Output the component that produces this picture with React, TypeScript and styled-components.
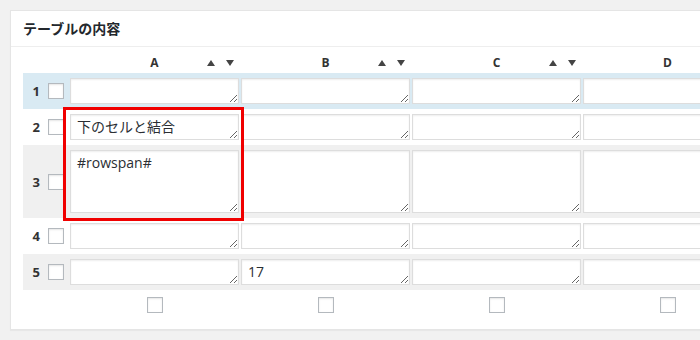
import React from "react";
import styled, {createGlobalStyle} from "styled-components";

const GlobalStyle = createGlobalStyle`
    html, body {
        margin: 0;
        padding: 0;
        background: #f1f1f1;
    }
    body {
        font-family: "Open Sans", "Noto Sans CJK JP", sans-serif;
        color: #32373c;
    }
`;

const Page = styled.div`
    width: 700px;
    height: 340px;
    overflow: hidden;
    padding: 10px 0 0 10px;
    box-sizing: border-box;
`;

const Postbox = styled.div`
    width: 780px;
    background: #fff;
    border: 1px solid #e5e5e5;
    box-shadow: 0 1px 1px rgba(0, 0, 0, .04);
`;

const Heading = styled.h2`
    margin: 0;
    padding: 8px 12px;
    font-family: "Noto Sans CJK JP", sans-serif;
    font-size: 14px;
    line-height: 19px;
    font-weight: 700;
    color: #23282d;
    border-bottom: 1px solid #eee;
`;

const Inside = styled.div`
    position: relative;
    padding: 0 12px 16px;
`;

const Row = styled.div<{$tone?: "blue" | "grey"}>`
    display: grid;
    grid-template-columns: 25px 22px repeat(4, 171px);
    align-items: center;
    padding: 5px 0;
    background: ${p => p.$tone === "blue" ? "#d9eaf3" : p.$tone === "grey" ? "#f0f0f0" : "transparent"};
`;

const HeadRow = styled(Row)`
    padding: 10px 0 4px;
`;

const FootRow = styled(Row)`
    padding: 7px 0 0;
`;

const ColHead = styled.div`
    width: 169px;
    display: grid;
    grid-template-columns: 1fr auto 1fr;
    align-items: center;
    font-size: 12px;
    line-height: 12px;
    font-weight: 700;
    color: #333;
`;

const Letter = styled.span`
    grid-column: 2;
`;

const Arrows = styled.span`
    grid-column: 3;
    justify-self: end;
    display: flex;
    gap: 11px;
    padding-right: 5px;
`;

const RowNum = styled.div`
    padding-right: 8px;
    text-align: right;
    font-size: 13px;
    font-weight: 700;
    color: #333;
`;

const Check = styled.input.attrs({type: "checkbox"})`
    appearance: none;
    display: block;
    width: 16px;
    height: 16px;
    margin: 0;
    background: #fff;
    border: 1px solid #b4b9be;
    box-shadow: inset 0 1px 2px rgba(0, 0, 0, .1);
    box-sizing: border-box;
`;

const Cell = styled.textarea<{$tall?: boolean}>`
    display: block;
    width: 169px;
    height: ${p => p.$tall ? 63 : 26}px;
    box-sizing: border-box;
    margin: 0;
    padding: 2px 6px;
    border: 1px solid #ddd;
    box-shadow: inset 0 1px 2px rgba(0, 0, 0, .07);
    background: #fff;
    font: 14px/20px "Open Sans", "Noto Sans CJK JP", sans-serif;
    color: #2a2e33;
    resize: both;
    outline: none;
    overflow: hidden;
`;

const FootCell = styled.div`
    width: 169px;
    display: flex;
    justify-content: center;
`;

const Highlight = styled.div`
    position: absolute;
    left: 52px;
    top: 60px;
    width: 181px;
    height: 114px;
    box-sizing: border-box;
    border: 3px solid #f00000;
    pointer-events: none;
`;

const Tri = ({down}: {down?: boolean}) => (
    <svg width={8} height={6} viewBox="0 0 8 6">
        <polygon points={down ? "0,0 8,0 4,6" : "4,0 8,6 0,6"} fill="#444"/>
    </svg>
);

const columns = ["A", "B", "C", "D"];

const rows: {n: number; tone?: "blue" | "grey"; tall?: boolean; cells: string[]}[] = [
    {n: 1, tone: "blue", cells: ["", "", "", ""]},
    {n: 2, cells: ["下のセルと結合", "", "", ""]},
    {n: 3, tone: "grey", tall: true, cells: ["#rowspan#", "", "", ""]},
    {n: 4, cells: ["", "", "", ""]},
    {n: 5, tone: "grey", cells: ["", "17", "", ""]},
];

export default function App() {
    return (
        <Page>
            <GlobalStyle/>
            <Postbox>
                <Heading>テーブルの内容</Heading>
                <Inside>
                    <HeadRow>
                        <span/>
                        <span/>
                        {columns.map((c, i) =>
                            <ColHead key={c}>
                                <Letter>{c}</Letter>
                                {i < 3 &&
                                    <Arrows>
                                        <Tri/>
                                        <Tri down/>
                                    </Arrows>}
                            </ColHead>
                        )}
                    </HeadRow>
                    {rows.map(row =>
                        <Row key={row.n} $tone={row.tone}>
                            <RowNum>{row.n}</RowNum>
                            <Check/>
                            {row.cells.map((v, i) =>
                                <Cell key={i} $tall={row.tall} defaultValue={v}/>
                            )}
                        </Row>
                    )}
                    <FootRow>
                        <span/>
                        <span/>
                        {columns.map(c =>
                            <FootCell key={c}><Check/></FootCell>
                        )}
                    </FootRow>
                    <Highlight/>
                </Inside>
            </Postbox>
        </Page>
    );
}
